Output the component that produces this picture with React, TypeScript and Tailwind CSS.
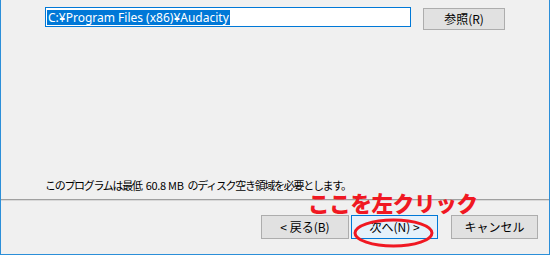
const jp = '"Meiryo UI", "Noto Sans CJK JP", sans-serif';

function WinButton({
  label,
  focused = false,
  className = "",
}: {
  label: string;
  focused?: boolean;
  className?: string;
}) {
  return (
    <div
      className={`flex items-center justify-center text-[12px] text-black border ${
        focused ? "bg-[#e5f1fb] border-[#0078d7]" : "bg-[#e1e1e1] border-[#adadad]"
      } ${className}`}
    >
      {label}
    </div>
  );
}

export default function App() {
  return (
    <div
      className="relative w-[550px] h-[255px] bg-[#f0f0f0] border-x border-b border-[#2b8fd9] flex flex-col overflow-hidden"
      style={{ fontFamily: jp }}
    >
      {/* install path row */}
      <div className="flex items-start pt-[7px] pl-[44px]">
        <div className="w-[366px] h-[20px] bg-white border border-[#0078d7] flex items-center pl-[1px]">
          <span
            className="bg-[#0078d7] text-white text-[12px] leading-[15px] h-[15px] px-[1px]"
            style={{ fontFamily: '"Noto Sans", "Open Sans", sans-serif' }}
          >
            C:¥Program Files (x86)¥Audacity
          </span>
        </div>
        <WinButton label="参照(R)" className="ml-[12px] mt-[1px] w-[82px] h-[22px]" />
      </div>

      {/* disk space note */}
      <div className="mt-[148px] pl-[44px] h-[14px] leading-[14px] flex items-center text-[11px] text-black tracking-[-1.3px] whitespace-nowrap">
        このプログラムは最低
        <span className="tracking-[-0.3px] mx-[4px]">60.8 MB</span>
        のディスク空き領域を必要とします。
      </div>

      {/* separator */}
      <div className="mt-[7px] h-[2px] border-t border-[#a0a0a0] bg-[#d8d8d8]" />

      {/* wizard buttons */}
      <div className="mt-[14px] flex pl-[260px]">
        <WinButton label="< 戻る(B)" className="w-[88px] h-[24px] leading-[16px]" />
        <WinButton label="次へ(N) >" focused className="ml-[2px] w-[87px] h-[24px] leading-[16px]" />
        <WinButton label="キャンセル" className="ml-[13px] w-[87px] h-[24px] leading-[16px]" />
      </div>

      {/* annotation */}
      <div className="absolute left-[307px] top-[193px] text-[21.5px] font-black leading-[20px] text-[#f01822] tracking-[-0.3px] whitespace-nowrap">
        ここを左クリック
      </div>
      <svg className="absolute left-[352px] top-[218px]" width="81" height="30" viewBox="0 0 81 30">
        <ellipse cx="40.5" cy="15" rx="38.5" ry="13" fill="none" stroke="#f01822" strokeWidth="3" />
      </svg>
    </div>
  );
}
